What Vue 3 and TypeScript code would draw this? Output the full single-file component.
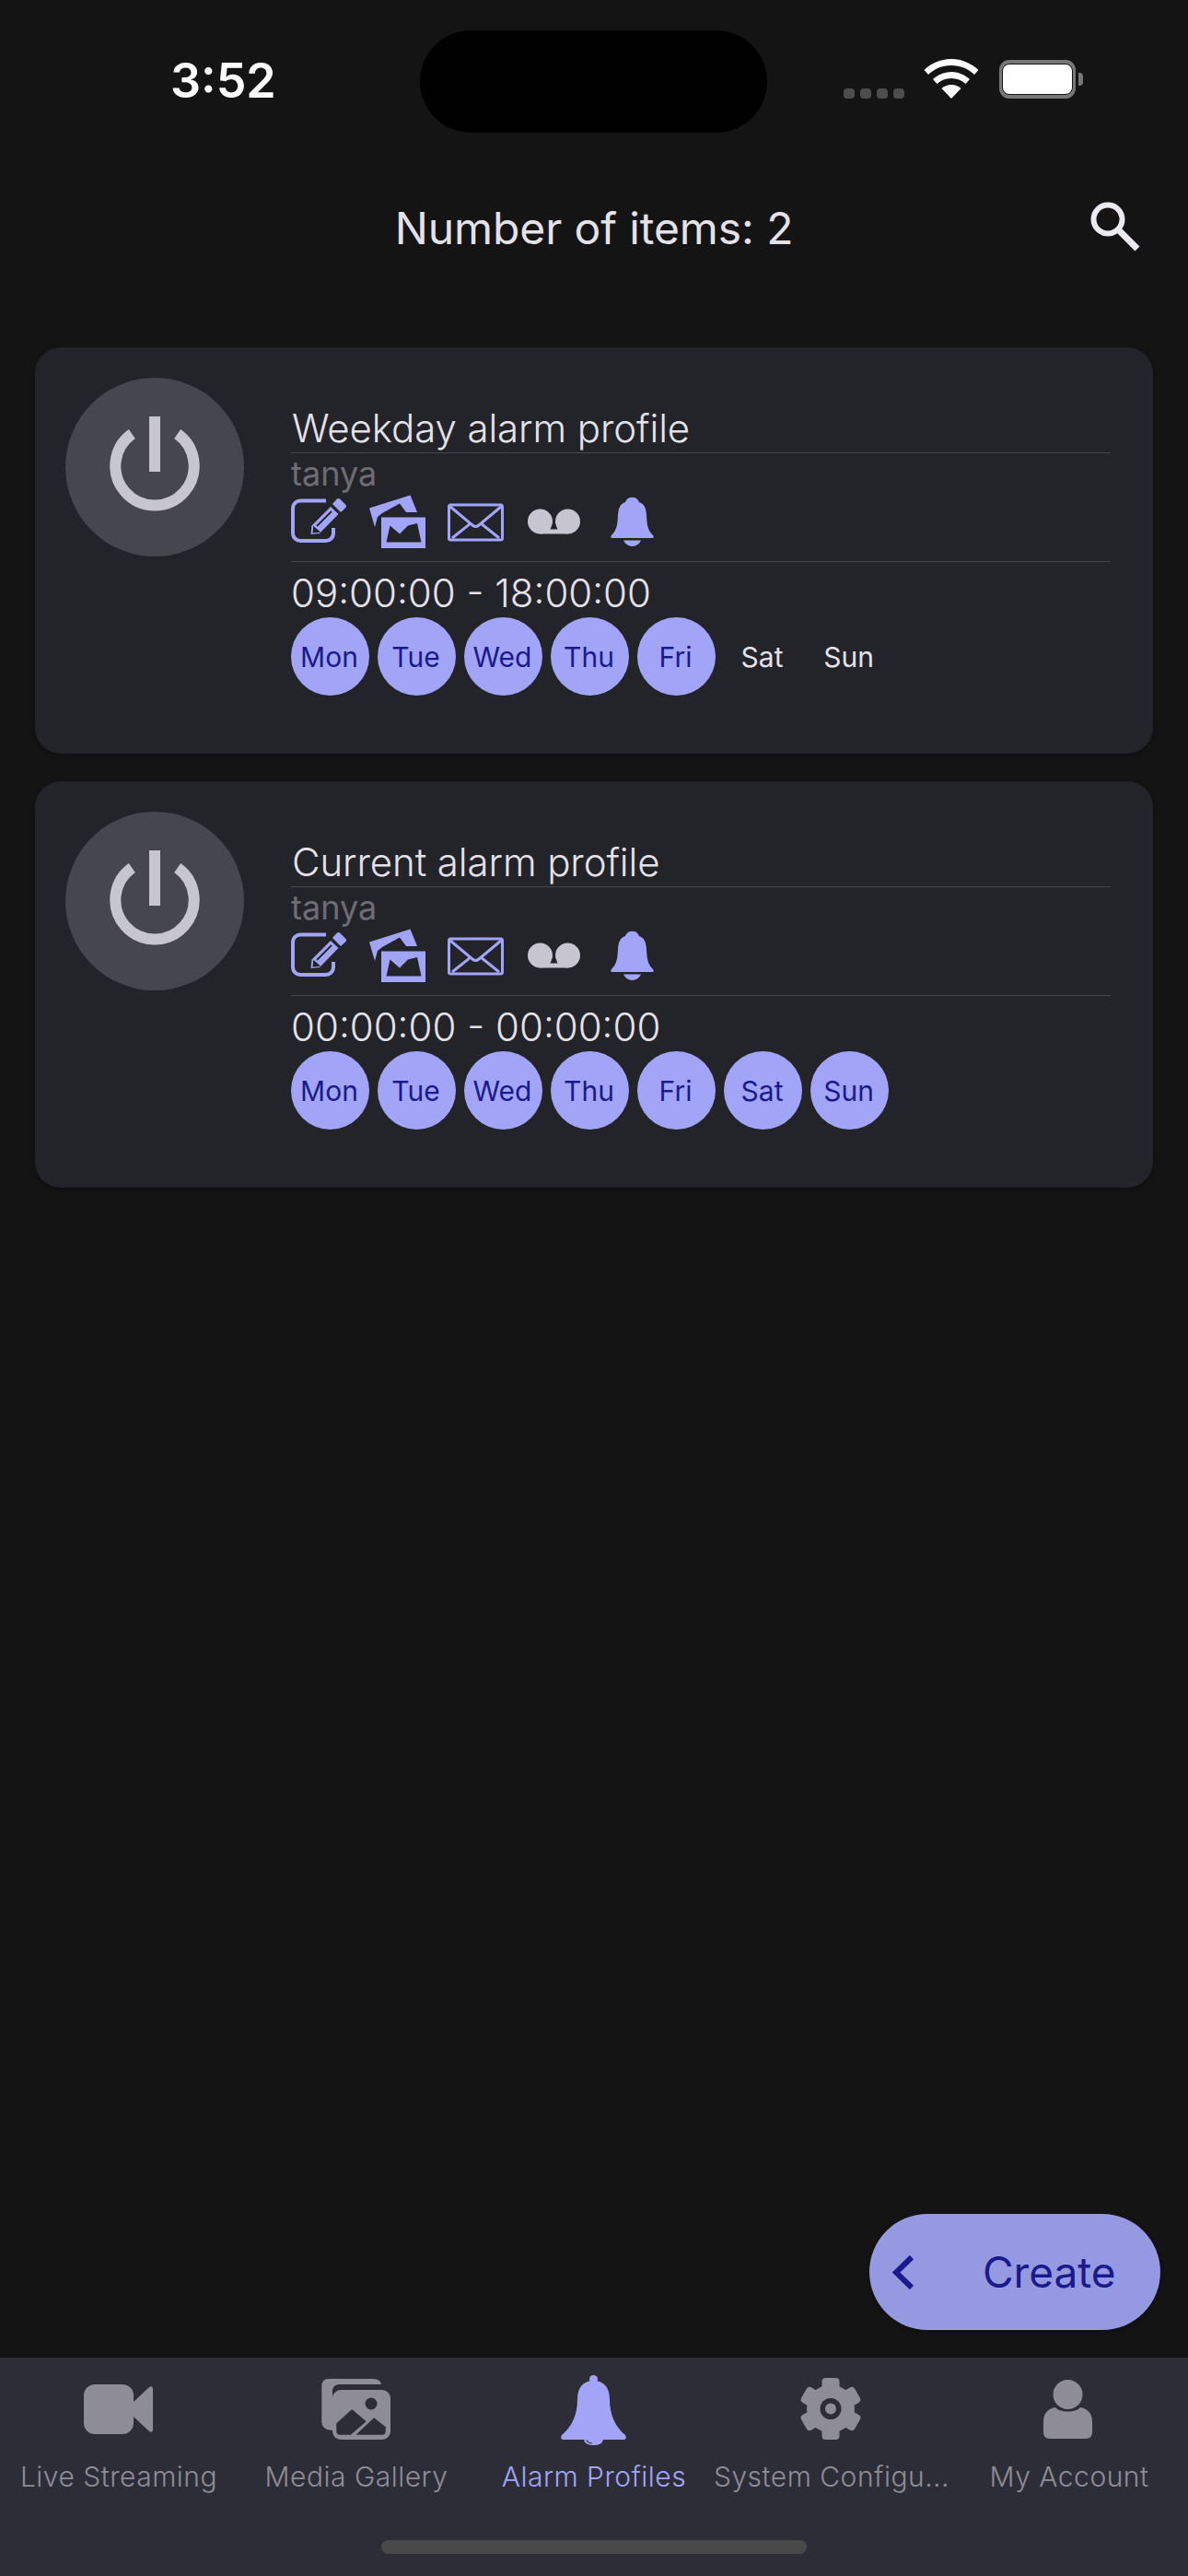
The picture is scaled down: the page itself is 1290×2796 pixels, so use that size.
<script setup lang="ts">
interface Profile { title: string; owner: string; time: string; days: boolean[] }
const dayNames = ['Mon', 'Tue', 'Wed', 'Thu', 'Fri', 'Sat', 'Sun']
const profiles: Profile[] = [
  { title: 'Weekday alarm profile', owner: 'tanya', time: '09:00:00 - 18:00:00', days: [true, true, true, true, true, false, false] },
  { title: 'Current alarm profile', owner: 'tanya', time: '00:00:00 - 00:00:00', days: [true, true, true, true, true, true, true] },
]
const gearTeeth = [0, 60, 120, 180, 240, 300]
</script>

<template>
  <div class="phone">
    <div class="status">
      <div class="time">3:52</div>
      <div class="island"></div>
      <div class="sys">
        <div class="dots"><i></i><i></i><i></i><i></i></div>
        <svg class="wifi" width="60" height="43" viewBox="0 0 60 43" fill="#fff">
          <path d="M30 0C19 0 8.500 4.500 0.500 12L5 17C11.500 10.500 20.500 7 30 7S48.500 10.500 55 17L59.500 12C51.500 4.500 41 0 30 0Z" />
          <path d="M30 14C22.500 14 15.500 17 10 22L14.500 27C18.500 23 24 21 30 21S41.500 23 45.500 27L50 22C44.500 17 37.500 14 30 14Z" />
          <path d="M30 28C26 28 22.500 29.500 19.500 32L30 43L40.500 32C37.500 29.500 34 28 30 28Z" />
        </svg>
        <div class="battery"><div class="cell"></div></div>
        <div class="nub"></div>
      </div>
    </div>

    <header class="header">
      <h1 class="heading">Number of items: 2</h1>
      <svg class="search" width="56" height="56" viewBox="0 0 56 56" fill="none" stroke="#eceaf0" stroke-width="6">
        <circle cx="20" cy="20" r="15.500" />
        <path d="M31 31L52 52" stroke-width="7" />
      </svg>
    </header>

    <main class="list">
      <article v-for="p in profiles" :key="p.title" class="card">
        <div class="power">
          <svg width="194" height="194" viewBox="0 0 194 194" fill="none" stroke="#c6c5d0" stroke-width="12">
            <path d="M72.300 61A42.700 42.700 0 1 0 121.700 61" />
            <path d="M97 42V102" />
          </svg>
        </div>
        <div class="content">
          <div class="title">{{ p.title }}</div>
          <div class="owner">{{ p.owner }}</div>
          <div class="icons">
            <svg width="61" height="61" viewBox="0 0 61 61">
              <path d="M38 6.500H10a8 8 0 0 0-8 8V42a8 8 0 0 0 8 8H38a8 8 0 0 0 8-8V36" fill="none" stroke="#a2a5f7" stroke-width="4" />
              <path d="M21.500 43L22.500 33.500L43 13L51.500 21L31 42Z" fill="#a2a5f7" />
              <path d="M45 10L50 4.500Q51.500 3.500 53 4.500L59.500 11Q60.500 12.500 59.500 14L54 19Z" fill="#a2a5f7" />
              <path d="M28 34L44 18M24.500 40.500L25 35.500L30 40Z" stroke="#23242a" stroke-width="1.800" fill="#23242a" />
            </svg>
            <svg width="61" height="61" viewBox="0 0 61 61">
              <path d="M0 14.500L44.500 0.500L52 19H40L33 9.500L14 20L9 24L6 35Z" fill="#a2a5f7" />
              <rect x="13" y="24.500" width="48" height="33.500" fill="#a2a5f7" />
              <path d="M18.500 51.500L22.500 33.500L33 42.500L42 33.500L52 31L56.500 51.500Z" fill="#23242a" />
            </svg>
            <svg width="61" height="61" viewBox="0 0 61 61" fill="none" stroke="#a2a5f7" stroke-width="3">
              <rect x="1.500" y="11" width="58" height="38" rx="2" />
              <path d="M3 13L27 33Q30.500 36 34 33L58 13M5 47L25 31M56 47L36 31" />
            </svg>
            <svg width="61" height="61" viewBox="0 0 61 61" fill="#c6c5d0">
              <circle cx="15.500" cy="29" r="13.500" />
              <circle cx="45.500" cy="29" r="13.500" />
              <path d="M15 35H46V42.500H15Z" />
              <path d="M30.500 28L26.500 37.500H34.500Z" fill="#23242a" />
            </svg>
            <svg width="61" height="61" viewBox="0 0 61 61" fill="#a2a5f7">
              <path d="M30.500 2.700C25 2.700 24 6 23 8C17 10 15.500 15 15 22C14.500 32 14 38 8 44Q6 47 9 47H52Q55 47 53 44C47 38 46.500 32 46 22C45.500 15 44 10 38 8C37 6 36 2.700 30.500 2.700Z" />
              <path d="M21 49.500H40Q37 56 30.500 56T21 49.500Z" />
            </svg>
          </div>
          <div class="range">{{ p.time }}</div>
          <div class="days">
            <span v-for="(d, i) in dayNames" :key="d" class="day" :class="{ on: p.days[i] }">{{ d }}</span>
          </div>
        </div>
      </article>
    </main>

    <button class="fab">
      <svg width="24" height="37" viewBox="0 0 24 37" fill="none" stroke="#1a1a8c" stroke-width="6">
        <path d="M21 2L4 18.500L21 35" />
      </svg>
      <span>Create</span>
    </button>

    <nav class="tabs">
      <div class="tab">
        <svg width="80" height="80" viewBox="0 0 80 80" fill="#8e8d96">
          <rect x="2" y="12" width="54" height="54" rx="12" />
          <path d="M56 31L73 15Q77 13 77 17V61Q77 65 73 63L56 47Z" />
        </svg>
        <span>Live Streaming</span>
      </div>
      <div class="tab">
        <svg width="80" height="80" viewBox="0 0 80 80" fill="#8e8d96">
          <path d="M10 6H58Q66 6 67 12H22Q14 12 14 20V62Q3 61 2.300 54V14Q2.300 6 10 6Z" />
          <rect x="14" y="18" width="63" height="54" rx="9" />
          <circle cx="56" cy="33" r="6.500" fill="#2d2d37" />
          <path d="M18.300 54.300L35.200 39L50.700 52.300L33.900 66.700H22Q18.300 66.700 18.300 63ZM39.400 66.700L59.200 48.300L71.800 58.300V63Q71.800 66.700 68 66.700Z" fill="#2d2d37" />
        </svg>
        <span>Media Gallery</span>
      </div>
      <div class="tab active">
        <svg width="80" height="80" viewBox="0 0 80 80" fill="#a2a5f7">
          <circle cx="39.500" cy="6.500" r="4.500" />
          <path d="M39.500 8C28 8 22 16 22 28C22 45 16 58 5 67Q3 71 6 72H73Q76 71 74 67C63 58 57 45 57 28C57 16 51 8 39.500 8Z" />
          <path d="M29 72H50Q49 78 39.500 78T29 72Z" />
          <path d="M32 72.500Q34 76 38 76" fill="none" stroke="#2d2d37" stroke-width="1.200" />
        </svg>
        <span>Alarm Profiles</span>
      </div>
      <div class="tab">
        <svg width="80" height="80" viewBox="0 0 80 80" fill="#8e8d96">
          <circle cx="39" cy="38.500" r="26" />
          <g transform="translate(39 38.500)">
            <rect v-for="a in gearTeeth" :key="a" x="-9.500" y="-33.500" width="19" height="18" rx="4" :transform="`rotate(${a})`" />
          </g>
          <circle cx="39" cy="38.500" r="11.500" fill="#2d2d37" />
          <circle cx="39" cy="38.500" r="6" />
        </svg>
        <span>System Configu...</span>
      </div>
      <div class="tab">
        <svg width="80" height="80" viewBox="0 0 80 80" fill="#8e8d96">
          <ellipse cx="38.500" cy="23" rx="16" ry="16" />
          <path d="M12 64V52C12 43 18 38 25 37C30 43 47 43 52 37C59 38 65 43 65 52V64Q65 71 58 71H19Q12 71 12 64Z" />
        </svg>
        <span>My Account</span>
      </div>
      <div class="indicator"></div>
    </nav>
  </div>
</template>

<style>
html, body { margin: 0; background: #141414; }
</style>

<style scoped>
.phone {
  position: relative;
  width: 1290px;
  height: 2796px;
  display: flex;
  flex-direction: column;
  background: #141414;
  font-family: Inter, "Noto Sans", sans-serif;
  overflow: hidden;
}
.status {
  height: 165px;
  box-sizing: border-box;
  padding-top: 33px;
  display: grid;
  grid-template-columns: 456px 377px 457px;
  flex: none;
}
.time {
  height: 111px;
  line-height: 111px;
  padding-left: 185px;
  color: #fff;
  font-size: 52px;
  font-weight: 600;
  margin-top: -1px;
}
.island { height: 111px; background: #000; border-radius: 56px; }
.sys { display: flex; align-items: flex-end; height: 74px; padding-left: 83px; }
.dots { display: flex; gap: 6px; width: 66px; margin-right: 21px; }
.dots i { display: block; width: 12px; height: 11px; border-radius: 4px; background: #4d4d4d; }
.wifi { margin-right: 22px; }
.battery {
  box-sizing: border-box;
  width: 83px;
  height: 42px;
  padding: 4px 3px;
  background: #777;
  border-radius: 11px;
}
.cell { height: 100%; background: #fff; border-radius: 8px; border: 1px solid #141414; box-sizing: border-box; }
.nub { width: 5px; height: 14px; margin: 0 0 14px 3px; background: #777; border-radius: 0 4px 4px 0; }
.header {
  position: relative;
  height: 212px;
  flex: none;
  display: flex;
  justify-content: center;
  align-items: flex-start;
}
.heading {
  margin: 54px 0 0;
  font-size: 48px;
  line-height: 58px;
  font-weight: 400;
  letter-spacing: -0.1px;
  color: #e5e1e9;
}
.search { position: absolute; left: 1183px; top: 53px; }
.list { display: flex; flex-direction: column; gap: 30px; padding: 0 38px; }
.card {
  height: 441px;
  display: flex;
  background: #23242a;
  border-radius: 28px;
  box-shadow: 0 2px 6px rgba(0, 0, 0, 0.3);
}
.power {
  width: 194px;
  height: 194px;
  margin: 33px 0 0 33px;
  border-radius: 50%;
  background: #46474e;
  flex: none;
}
.power svg { display: block; }
.content { flex: 1; margin: 0 46px 0 51px; padding-top: 62px; color: #e5e1e9; font-weight: 300; }
.title {
  height: 52px;
  line-height: 52px;
  font-size: 42px;
  padding-left: 1px;
  letter-spacing: -0.1px;
  border-bottom: 1px solid #46474e;
}
.owner { height: 45px; line-height: 45px; font-size: 36px; color: #6e6d76; font-weight: 400; }
.icons {
  display: flex;
  gap: 24px;
  height: 73px;
  box-sizing: border-box;
  border-bottom: 1px solid #46474e;
}
.icons svg { display: block; }
.range { margin-top: 10px; height: 48px; line-height: 48px; font-size: 42px; margin-bottom: 2px; }
.days { display: flex; gap: 9px; }
.day {
  width: 85px;
  height: 85px;
  border-radius: 50%;
  display: flex;
  align-items: center;
  justify-content: center;
  font-size: 30px;
  font-weight: 400;
  color: #e5e1e9;
  padding-right: 2px;
  box-sizing: border-box;
}
.day.on { background: #a2a5f7; color: #1a1a8c; }
.fab {
  position: absolute;
  left: 944px;
  top: 2403px;
  width: 316px;
  height: 126px;
  border: 0;
  border-radius: 63px;
  background: #9599e2;
  display: flex;
  align-items: center;
  padding: 0 0 0 25px;
  color: #1a1a8c;
  font-family: inherit;
  font-size: 46px;
  font-weight: 400;
  box-shadow: 0 2px 6px rgba(0, 0, 0, 0.3);
}
.fab span { margin-left: 74px; }
.tabs {
  position: absolute;
  left: 0;
  top: 2559px;
  width: 1290px;
  height: 237px;
  box-sizing: border-box;
  padding-top: 16px;
  display: grid;
  grid-template-columns: repeat(5, 258px);
  align-items: start;
  background: #2d2d37;
  border-top: 1px solid #35353f;
}
.tab { display: flex; flex-direction: column; align-items: center; color: #8e8d96; font-size: 30px; line-height: 40px; font-weight: 300; letter-spacing: 0.5px; }
.tab svg { display: block; margin-bottom: 12px; }
.tab.active { color: #a2a5f7; }
.indicator {
  position: absolute;
  left: 414px;
  top: 197px;
  width: 462px;
  height: 15px;
  border-radius: 8px;
  background: #494949;
}
</style>
